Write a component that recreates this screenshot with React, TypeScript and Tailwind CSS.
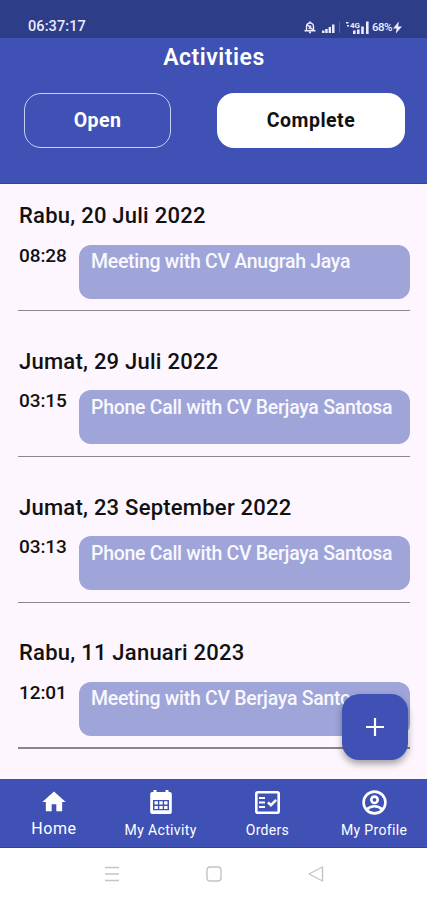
import { MdHome } from "react-icons/md";

interface Activity {
    date: string;
    time: string;
    title: string;
}

const activities: Activity[] = [
    { date: "Rabu, 20 Juli 2022", time: "08:28", title: "Meeting with CV Anugrah Jaya" },
    { date: "Jumat, 29 Juli 2022", time: "03:15", title: "Phone Call with CV Berjaya Santosa" },
    { date: "Jumat, 23 September 2022", time: "03:13", title: "Phone Call with CV Berjaya Santosa" },
    { date: "Rabu, 11 Januari 2023", time: "12:01", title: "Meeting with CV Berjaya Santosa" },
];

const BellOffIcon = () => (
    <svg className="h-[14px] w-[12px]" viewBox="0 0 12 14" fill="none" stroke="currentColor" strokeWidth="1.4" aria-hidden="true">
        <path d="M.5 10.7h11M2.5 10.5v-4a3.5 3.5 0 0 1 7 0v4M6 1.2v2M5 12.5h2M2.5 4l7 6.5" />
        <path d="M4.8 6h2.4L4.8 8.7h2.4" strokeWidth="1" />
    </svg>
);

const SignalIcon = () => (
    <svg className="h-[12px] w-[13px]" viewBox="0 0 13 12" fill="currentColor" aria-hidden="true">
        <path d="M0 9.5h2.5V12H0zM3.2 8h2.5v4H3.2zM6.6 6H9v6H6.6zM10 3.5h2.5V12H10z" />
    </svg>
);

const MobileDataIcon = () => (
    <svg className="h-[13px] w-[23px]" viewBox="0 0 23 13" fill="currentColor" aria-hidden="true">
        <path d="M0 1h2.5v1.5H0zM1 4h2v1.5H1zM7 9.5h2.6V13H7zM11 8.5h2.6V13H11zM15.2 5.5h2.6V13h-2.6zM20 .5h2.6V13H20z" />
        <text x="4" y="7" fontSize="8" fontWeight="700">4G</text>
    </svg>
);

const BoltIcon = () => (
    <svg className="h-[13px] w-[9px]" viewBox="0 0 9 13" fill="currentColor" aria-hidden="true">
        <path d="M5.8.5 0 7.5h3.6l-.8 5L9 5.500H5.200z" />
    </svg>
);

const CalendarIcon = () => (
    <svg className="h-[26px] w-[24px]" viewBox="0 0 24 26" aria-hidden="true">
        <path
            fill="currentColor"
            fillRule="evenodd"
            d="M4.5 1h3v2h9V1h3v2h1.3a2 2 0 0 1 2 2v18a2 2 0 0 1-2 2H3.2a2 2 0 0 1-2-2V5a2 2 0 0 1 2-2h1.3zM4 11v10.3h16V11z"
        />
        <path
            fill="currentColor"
            d="M5.5 12.3h3.4v3.1H5.5zM10.3 12.3h3.4v3.1h-3.4zM15.1 12.3h3.4v3.1h-3.4zM5.5 16.9h3.4V20H5.5zM10.3 16.9h3.4V20h-3.4zM15.1 16.9h3.4V20h-3.4z"
        />
    </svg>
);

const OrdersIcon = () => (
    <svg className="h-[23px] w-[25px]" viewBox="0 0 25 23" fill="none" stroke="currentColor" strokeWidth="2.6" aria-hidden="true">
        <rect x="1.3" y="1.3" width="22.4" height="20.4" rx="1.5" />
        <path d="M4 7h6M4 11.5h6M4 16h6" strokeWidth="2.2" />
        <path d="m13 11.3 2.9 2.9 5.3-5.4" strokeWidth="2.5" />
    </svg>
);

const ProfileIcon = () => (
    <svg className="size-[25px]" viewBox="0 0 25 25" fill="none" stroke="currentColor" strokeWidth="2.6" aria-hidden="true">
        <circle cx="12.5" cy="12.5" r="10.9" />
        <circle cx="12.5" cy="9.8" r="3.2" />
        <path d="M4.8 19.5c4-4.3 11.4-4.3 15.4 0" />
    </svg>
);

const StatusBar = () => (
    <div className="flex h-[38px] shrink-0 items-end justify-between bg-[#2e3d87] pr-[25px] pb-[3px] pl-7 text-[#e9ecff]">
        <span className="text-[14.5px] leading-4 font-medium tracking-[0.1px]">06:37:17</span>
        <div className="flex h-4 items-center">
            <BellOffIcon />
            <span className="ml-[6px]"><SignalIcon /></span>
            <span className="ml-1 h-[11px] w-px bg-[#59659f]" />
            <span className="ml-[6px]"><MobileDataIcon /></span>
            <span className="ml-[3px] text-[11.5px] leading-4 font-medium tracking-[-0.5px]">68%</span>
            <span className="ml-[1px]"><BoltIcon /></span>
        </div>
    </div>
);

const Header = () => (
    <header className="h-[146px] shrink-0 border-b border-[#3443a5] bg-[#3f51b5]">
        <h1 className="pt-[6px] pl-px text-center text-[23px] leading-7 font-semibold tracking-[0.5px] text-white">Activities</h1>
        <div className="mt-[21px] flex justify-between pr-[22px] pl-6">
            <button type="button" className="h-[55px] w-[147px] rounded-[17px] border-[1.5px] border-[#c9d0f5] pt-px text-[19.5px] font-bold tracking-[0.4px] text-white">
                Open
            </button>
            <button type="button" className="h-[55px] w-[188px] rounded-[17px] bg-white pt-px text-[19.5px] font-bold tracking-[0.5px] text-[#111111]">
                Complete
            </button>
        </div>
    </header>
);

const ActivityItem = ({ activity }: { activity: Activity }) => (
    <section className="h-[145.75px] shrink-0 px-[18px] pt-[17px]">
        <h2 className="pl-px text-[22px] leading-[30px] font-medium tracking-[0.24px] text-[#111111]">{activity.date}</h2>
        <div className="mt-[13.5px] mr-[-1px] flex justify-between">
            <span className="pl-px text-[19px] leading-[22px] font-medium tracking-[-0.1px] text-[#111111]">{activity.time}</span>
            <div className="h-[54px] w-[331px] overflow-hidden rounded-xl bg-[#9fa4d9] pt-[5.5px] pl-3 text-[19.5px] leading-6 font-medium tracking-[-0.29px] whitespace-nowrap text-[#f8f8ff]">
                {activity.title}
            </div>
        </div>
        <div className="mt-[11.5px] mr-[-1px] h-[1.3px] bg-[#8b858d]" />
    </section>
);

const NavBar = () => (
    <nav className="grid h-[69px] shrink-0 grid-cols-4 border-b border-[#2f409f] bg-[#3f51b5] pt-[9px] text-white">
        <a className="flex flex-col items-center pl-px">
            <MdHome className="size-[28px]" aria-hidden="true" />
            <span className="mt-[3px] text-[16px] leading-5 tracking-[0.5px]">Home</span>
        </a>
        <a className="flex flex-col items-center pt-px pl-px">
            <CalendarIcon />
            <span className="mt-[5px] text-[14px] leading-5 tracking-[0.35px]">My Activity</span>
        </a>
        <a className="flex flex-col items-center pt-[3px] pl-px">
            <OrdersIcon />
            <span className="mt-[6px] text-[14px] leading-5 tracking-[0.3px]">Orders</span>
        </a>
        <a className="flex flex-col items-center pt-[2px] pl-px">
            <ProfileIcon />
            <span className="mt-[5px] text-[14px] leading-5 tracking-[0.35px]">My Profile</span>
        </a>
    </nav>
);

const SystemBar = () => (
    <div className="flex h-[52px] shrink-0 items-center justify-center gap-[86px] bg-white text-[#c4c4c4]">
        <svg className="size-4" viewBox="0 0 16 16" fill="none" stroke="currentColor" strokeWidth="1.4" aria-hidden="true">
            <path d="M1 1.5h14M1 8h14M1 14.5h14" />
        </svg>
        <svg className="size-4" viewBox="0 0 16 16" fill="none" stroke="currentColor" strokeWidth="1.4" aria-hidden="true">
            <rect x="1" y="1" width="14" height="14" rx="3" />
        </svg>
        <svg className="size-4" viewBox="0 0 16 16" fill="none" stroke="currentColor" strokeWidth="1.4" strokeLinejoin="round" aria-hidden="true">
            <path d="M14.5 1v14L1 8z" />
        </svg>
    </div>
);

const App = () => {
    return (
        <div className="flex h-[900px] w-full flex-col overflow-hidden font-[Roboto,sans-serif]">
            <StatusBar />
            <Header />
            <main className="relative flex min-h-0 flex-1 flex-col bg-[#fdf6fe]">
                {activities.map((activity) => (
                    <ActivityItem key={activity.date} activity={activity} />
                ))}
                <button
                    type="button"
                    aria-label="Add activity"
                    className="absolute right-[19px] bottom-[19px] flex size-[66px] items-center justify-center rounded-[17px] bg-[#3f51b5] text-white shadow-[0_4px_7px_rgba(0,0,0,0.35)]"
                >
                    <svg className="size-[18px]" viewBox="0 0 18 18" stroke="currentColor" strokeWidth="2.2" aria-hidden="true">
                        <path d="M9 0v18M0 9h18" />
                    </svg>
                </button>
            </main>
            <NavBar />
            <SystemBar />
        </div>
    );
};

export default App;
